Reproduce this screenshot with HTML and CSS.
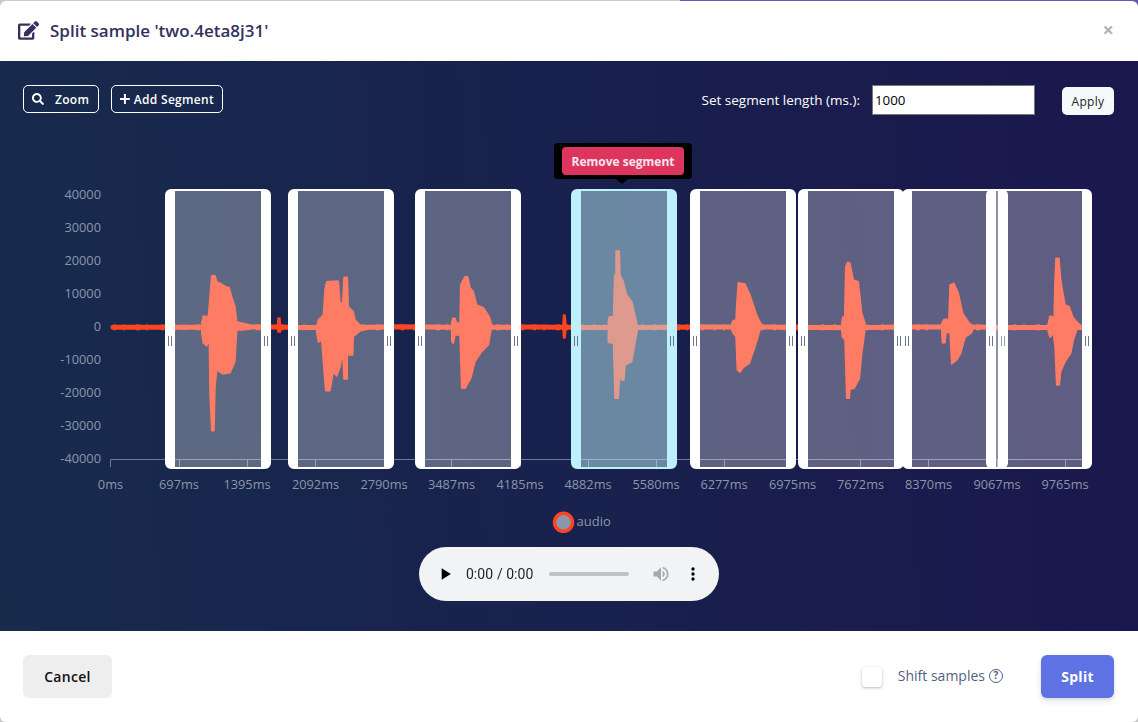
FILE: index.html
```html
<!DOCTYPE html>
<html lang="en">
<head>
    <meta charset="UTF-8">
    <meta name="viewport" content="width=device-width, initial-scale=1.0">
    <title>Split sample</title>
    <link rel="stylesheet" href="styles.css">
</head>
<body>
    <div class="modal">
        <!-- Header -->
        <div class="modal-header">
            <svg class="title-icon" viewBox="0 0 576 512"><path d="M402.6 83.2l90.2 90.2c3.8 3.8 3.8 10 0 13.8L274.4 405.6l-92.8 10.3c-12.4 1.4-22.9-9.1-21.5-21.5l10.3-92.8L388.8 83.2c3.8-3.8 10-3.8 13.8 0zm162-22.9l-48.8-48.8c-15.2-15.2-39.9-15.2-55.2 0l-35.4 35.4c-3.8 3.8-3.8 10 0 13.8l90.2 90.2c3.8 3.8 10 3.8 13.8 0l35.4-35.4c15.2-15.3 15.2-40 0-55.2zM384 346.2V448H64V128h229.8c3.2 0 6.2-1.3 8.5-3.5l40-40c7.6-7.6 2.2-20.5-8.5-20.5H48C21.5 64 0 85.5 0 112v352c0 26.5 21.5 48 48 48h352c26.5 0 48-21.5 48-48V306.2c0-10.7-12.9-16-20.5-8.5l-40 40c-2.2 2.3-3.5 5.3-3.5 8.5z"/></svg>
            <h5 class="modal-title">Split sample 'two.4eta8j31'</h5>
            <span class="close">×</span>
        </div>

        <!-- Body -->
        <div class="modal-body">
            <div class="toolbar">
                <button class="btn-outline btn-zoom">
                    <svg class="zoom-icon" viewBox="0 0 512 512"><path d="M505 442.7L405.3 343c-4.5-4.5-10.6-7-17-7H372c27.6-35.3 44-79.7 44-128C416 93.1 322.9 0 208 0S0 93.1 0 208s93.1 208 208 208c48.3 0 92.7-16.4 128-44v16.3c0 6.4 2.5 12.5 7 17l99.7 99.7c9.4 9.4 24.6 9.4 33.9 0l28.3-28.3c9.4-9.4 9.4-24.6.1-34zM208 336c-70.7 0-128-57.2-128-128 0-70.7 57.2-128 128-128 70.7 0 128 57.2 128 128 0 70.7-57.2 128-128 128z"/></svg>
                    Zoom
                </button>
                <button class="btn-outline btn-add">
                    <svg class="plus-icon" viewBox="0 0 10 10"><path d="M5 0v10M0 5h10"/></svg>
                    Add Segment
                </button>
                <div class="length-form">
                    <label class="length-label">Set segment length (ms.):</label>
                    <input class="length-input" type="text" value="1000">
                    <button class="btn-apply">Apply</button>
                </div>
            </div>

            <div class="chart">
                <svg class="chart-svg" viewBox="0 140 1138 400">
                    <!-- Y axis -->
                    <g class="y-labels">
                        <text x="101" y="198.5">40000</text>
                        <text x="101" y="231.5">30000</text>
                        <text x="101" y="264.5">20000</text>
                        <text x="101" y="297.5">10000</text>
                        <text x="101" y="330.5">0</text>
                        <text x="101" y="363.5">-10000</text>
                        <text x="101" y="396.5">-20000</text>
                        <text x="101" y="429.5">-30000</text>
                        <text x="101" y="462.5">-40000</text>
                    </g>

                    <!-- X axis -->
                    <path class="axis" d="M110.5 467V459.5H1092M179.5 459.5V467M247.5 459.5V467M315.5 459.5V467M384.5 459.5V467M451.5 459.5V467M520.5 459.5V467M588.5 459.5V467M656.5 459.5V467M724.5 459.5V467M793.5 459.5V467M860.5 459.5V467M928.5 459.5V467M997.5 459.5V467M1065.5 459.5V467"/>
                    <g class="x-labels">
                        <text x="110.5" y="489">0ms</text>
                        <text x="179" y="489">697ms</text>
                        <text x="247" y="489">1395ms</text>
                        <text x="315.5" y="489">2092ms</text>
                        <text x="384" y="489">2790ms</text>
                        <text x="451.5" y="489">3487ms</text>
                        <text x="520" y="489">4185ms</text>
                        <text x="588" y="489">4882ms</text>
                        <text x="656" y="489">5580ms</text>
                        <text x="724" y="489">6277ms</text>
                        <text x="792.5" y="489">6975ms</text>
                        <text x="860.5" y="489">7672ms</text>
                        <text x="928.5" y="489">8370ms</text>
                        <text x="997" y="489">9067ms</text>
                        <text x="1065" y="489">9765ms</text>
                    </g>

                    <!-- Waveform -->
                    <path class="baseline" d="M113 327.3H200L240 327H279L300 327.5H360L400 326.8L450 327.3H495L530 327L600 327.5H640L700 327H730H765L800 327.5H840H870L900 327H940H975L1010 327.5H1045H1085"/>
                    <path class="baseline-noise" d="M113 327.3H1082"/>
                    <g class="wave">
                        <path d="M277.5 326L278 318H280L280.5 326L280.5 332H278L277.5 328Z"/>
                        <path d="M563 325L563.5 315H565L566 325L569 327L566 329L565 338H563.5L563 329L558 327Z"/>
                        <path d="M201.7 323L203.3 316L208.3 316.7L210 296.7L211.7 275.7H215L216.7 281.7L223.3 285L226.7 287.3H229L231.7 296.7L235 306.7L236.7 321.7L241.7 323L250 325V329L241.7 330H236.7L235 361.7L230 372.7L223.3 374L216.7 370L215 386.7L214 430.7H211.7L210 393L209.3 340L206.7 346L203.3 343L201.7 333Z"/>
                        <path d="M316.7 328L318.3 320L323.3 315L325 290L326.7 281.7L338.3 281L340 303H342.7L344 277.3H347.3L348.3 306.7L353.3 311.7L355 320L360 325L368 326V329L360 331L353.3 336.7L352.7 355H349.3L347.3 351.7V379H344L342.7 353L340 366.7L336.7 376L333.3 371.7L330 390.7H325.7L324 370L321.7 340L318.3 342L316.7 331.7Z"/>
                        <path d="M451.7 323L452.7 318.3H455L456.7 323H460L460.7 285L465 276.7H467.7L470 287.7L473.3 291.7L476.7 305L483.3 307.7L489.3 316.7L491.7 325L490.7 331.7L488.3 345L481.7 351.7L475 361.7L470.7 378.3L465 388.3H461.7L460 335H455L453.3 343.3L451.7 341.7V331.7Z"/>
                        <path d="M608.3 321.7L609.3 316.7H612L613.3 321.7L614.7 275H616V251H619.3L620 275L623.3 281.7L626.7 295L631.7 301.7L637.3 325V330L631.7 361.7L625 365L624 380H621.3L620 368.3L618.3 398.3H615L613.3 335L611.7 343.3L608.3 342.3V331.7Z"/>
                        <path d="M731.7 323.3L733.3 320.7L736 320L736.7 305L738.3 282.7L745 284L750 295L757.3 316.7L761.7 325L760 330L755 346.7L749.3 363.3L743.3 367.3L740 372.3L737.3 370L736 336.7L733.3 333.3L731.7 330Z"/>
                        <path d="M841.7 323.3L842.7 317.3L844.7 316.7L845.7 266.7L847.7 262.3L850 263.3L853.3 280L858.3 281.7L861.7 313.3L865 323.3V330L861.7 353.3L859.3 379L854 388.3L850 389.3L849.3 398.3H846.7L845 340L842.3 336.7L841.7 330Z"/>
                        <path d="M941.7 323.3L944 319.3H947.3L948.7 323.3L950 285L954 283.3L958.3 293.3L962.7 313.3L968.3 321.7L973.3 326.7L971.7 332.7L965 337.3L960.7 353.3L956.7 360L951.7 364L950 331.7L946 333.3L945 342.7H942.3L941.7 330Z"/>
                        <path d="M1048.3 323.3L1050 316L1052.3 316.7L1054 320L1055 280L1056 258.3H1059L1060.7 280L1065 305L1069.3 306.7L1072.7 316.7L1076.7 321.7L1081.7 326L1076.7 330L1073.3 340L1070.7 353.3L1065 361.7L1060.7 371.7L1059.3 385H1056.7L1055 346.7L1053.3 333.3L1050 337.3L1048.3 331.7Z"/>
                    </g>

                    <!-- Legend -->
                    <circle class="legend-dot" cx="563.5" cy="522.3" r="9"/>
                    <text class="legend-text" x="576.5" y="526">audio</text>
                </svg>

                <!-- Segments -->
                <div class="segment" style="left: 165px"><span class="handle handle-left"></span><span class="handle handle-right"></span></div>
                <div class="segment" style="left: 288.3px"><span class="handle handle-left"></span><span class="handle handle-right"></span></div>
                <div class="segment" style="left: 415px"><span class="handle handle-left"></span><span class="handle handle-right"></span></div>
                <div class="segment segment-active" style="left: 571.3px"><span class="handle handle-left"></span><span class="handle handle-right"></span></div>
                <div class="segment" style="left: 690.4px"><span class="handle handle-left"></span><span class="handle handle-right"></span></div>
                <div class="segment" style="left: 797.7px"><span class="handle handle-left"></span><span class="handle handle-right"></span></div>
                <div class="segment" style="left: 901.6px"><span class="handle handle-left"></span><span class="handle handle-right"></span></div>
                <div class="segment" style="left: 986.2px"><span class="handle handle-left"></span><span class="handle handle-right"></span></div>

                <div class="tooltip"><button class="btn-remove">Remove segment</button></div>
            </div>

            <div class="player">
                <audio controls></audio>
            </div>
        </div>

        <!-- Footer -->
        <div class="modal-footer">
            <button class="btn-cancel">Cancel</button>
            <label class="shift">
                <span class="checkbox"></span>
                <span class="shift-text">Shift samples</span>
                <span class="help">?</span>
            </label>
            <button class="btn-split">Split</button>
        </div>
    </div>
</body>
</html>
```

FILE: styles.css
```css
html, body {
    margin: 0;
    height: 722px;
    overflow: hidden;
}
body {
    font-family: "Open Sans", sans-serif;
    background: linear-gradient(90deg, #c9c9c9 680px, #6558b0 680px) top / 100% 6px no-repeat, #c9c9c9;
}
button {
    font-family: "Open Sans", sans-serif;
    cursor: pointer;
}
.modal {
    margin-top: 1px;
    height: 721px;
    background-color: #fff;
    border-radius: 6px;
    overflow: hidden;
    display: flex;
    flex-direction: column;
}

/* Header */
.modal-header {
    height: 60px;
    flex: none;
    display: flex;
    align-items: center;
    padding: 0 24px 2px 18px;
    box-sizing: border-box;
}
.title-icon {
    width: 21px;
    height: 19px;
    fill: #32325d;
    margin-right: 11px;
}
.modal-title {
    margin: 0;
    font-size: 17px;
    font-weight: 600;
    color: #32325d;
}
.close {
    margin-left: auto;
    font-size: 20px;
    font-weight: 700;
    line-height: 20px;
    color: #b3b3b3;
}

/* Body */
.modal-body {
    height: 570px;
    flex: none;
    background: linear-gradient(87deg, #172b4d 0, #1a174d 100%);
    display: flex;
    flex-direction: column;
}
.toolbar {
    display: flex;
    align-items: flex-start;
    padding: 24px 24px 0 23px;
    height: 30px;
    flex: none;
}
.btn-outline {
    height: 28px;
    box-sizing: border-box;
    display: flex;
    align-items: center;
    background: transparent;
    border: 1px solid #fff;
    border-radius: 5px;
    color: #fff;
    font-size: 12px;
    font-weight: 600;
    letter-spacing: 0.3px;
    padding: 0 8px;
    white-space: nowrap;
}
.btn-zoom {
    width: 76px;
    margin-right: 12px;
}
.btn-add {
    width: 112px;
}
.zoom-icon {
    width: 12px;
    height: 12px;
    fill: #fff;
    margin-right: 11px;
}
.plus-icon {
    width: 10px;
    height: 10px;
    stroke: #fff;
    stroke-width: 2;
    fill: none;
    margin-right: 4px;
}
.length-form {
    margin-left: auto;
    display: flex;
    align-items: flex-start;
}
.length-label {
    color: #fff;
    font-size: 13.5px;
    line-height: 30px;
    margin-right: 12px;
}
.length-input {
    width: 163px;
    height: 30px;
    box-sizing: border-box;
    padding: 1px 2px;
    border: 1px solid #767676;
    font-family: "Open Sans", sans-serif;
    font-size: 13.33px;
    color: #000;
    margin-right: 27px;
}
.btn-apply {
    width: 52px;
    height: 28px;
    margin-top: 2px;
    padding: 0;
    border: none;
    border-radius: 5px;
    background-color: #f6f9fc;
    color: #212529;
    font-size: 12px;
    letter-spacing: 0.3px;
}

/* Chart */
.chart {
    position: relative;
    height: 400px;
    margin-top: 25px;
    flex: none;
}
.chart-svg {
    display: block;
    width: 1138px;
    height: 400px;
}
.y-labels text {
    font-size: 12.8px;
    fill: #8c96aa;
    text-anchor: end;
}
.x-labels text {
    font-size: 12.8px;
    fill: #8c96aa;
    text-anchor: middle;
}
.axis {
    fill: none;
    stroke: #6f7a94;
    stroke-width: 1;
}
.baseline {
    fill: none;
    stroke: #ff4422;
    stroke-width: 5;
    stroke-linecap: round;
}
.baseline-noise {
    fill: none;
    stroke: #ff4422;
    stroke-width: 5.7;
    stroke-dasharray: 3 7 2 11 4 6 2 13 3 9;
}
.wave path {
    fill: #ff4422;
    stroke: #ff4422;
    stroke-width: 1.5;
    stroke-linejoin: round;
}
.legend-dot {
    fill: #8c96aa;
    stroke: #ff4422;
    stroke-width: 3.5;
}
.legend-text {
    font-size: 13px;
    fill: #8c96aa;
}
.segment {
    position: absolute;
    top: 49px;
    width: 106px;
    height: 280px;
    box-sizing: border-box;
    border: solid #fff;
    border-width: 2px 10px;
    border-radius: 6px;
    background-color: rgba(255, 255, 255, 0.3);
}
.segment-active {
    border-color: #bdf0fa;
    background-color: rgba(189, 240, 250, 0.5);
}
.handle {
    position: absolute;
    top: 145px;
    width: 2px;
    height: 10px;
    border: solid #6b7590;
    border-width: 0 1px;
}
.handle-left {
    left: -7px;
}
.handle-right {
    right: -7px;
}
.tooltip {
    position: absolute;
    left: 554px;
    top: 3px;
    width: 138px;
    height: 36px;
    box-sizing: border-box;
    padding: 4px 8px;
    background-color: #000;
    border-radius: 4px;
}
.tooltip::after {
    content: "";
    position: absolute;
    left: 62px;
    top: 36px;
    border: solid transparent;
    border-width: 5px 6px 0;
    border-top-color: #000;
}
.btn-remove {
    display: block;
    width: 122px;
    height: 28px;
    padding: 0;
    border: none;
    border-radius: 4px;
    background-color: #de355f;
    color: #f5e6ea;
    font-size: 12px;
    font-weight: 700;
}

/* Audio */
.player {
    display: flex;
    justify-content: center;
    margin-top: 7px;
}
.player audio {
    width: 300px;
    height: 54px;
}
.player audio::-webkit-media-controls-play-button {
    opacity: 1 !important;
    filter: brightness(0);
}

/* Footer */
.modal-footer {
    flex: 1;
    display: flex;
    align-items: flex-start;
    padding: 24px 24px 0 23px;
}
.btn-cancel {
    width: 89px;
    height: 43px;
    padding: 0;
    border: none;
    border-radius: 6px;
    background-color: #eee;
    color: #111;
    font-size: 14px;
    font-weight: 600;
    letter-spacing: 0.3px;
}
.shift {
    margin-left: auto;
    display: flex;
    align-items: center;
    height: 41px;
    margin-right: 38px;
}
.checkbox {
    width: 20px;
    height: 20px;
    margin-top: 2px;
    box-sizing: border-box;
    border-radius: 4px;
    background-color: #fff;
    box-shadow: 0 1px 3px rgba(50, 50, 93, 0.35);
    margin-right: 16px;
}
.shift-text {
    font-size: 14px;
    color: #525f7f;
}
.help {
    width: 14px;
    height: 14px;
    box-sizing: border-box;
    margin-left: 4px;
    border: 1.4px solid #525f7f;
    border-radius: 50%;
    color: #525f7f;
    font-size: 10px;
    font-weight: 700;
    line-height: 11.5px;
    text-align: center;
}
.btn-split {
    width: 73px;
    height: 43px;
    padding: 0;
    border: none;
    border-radius: 6px;
    background-color: #5e72e4;
    color: #fff;
    font-size: 14px;
    font-weight: 700;
    letter-spacing: 0.3px;
    box-shadow: 0 4px 6px rgba(50, 50, 93, 0.11), 0 1px 3px rgba(0, 0, 0, 0.08);
}
```
